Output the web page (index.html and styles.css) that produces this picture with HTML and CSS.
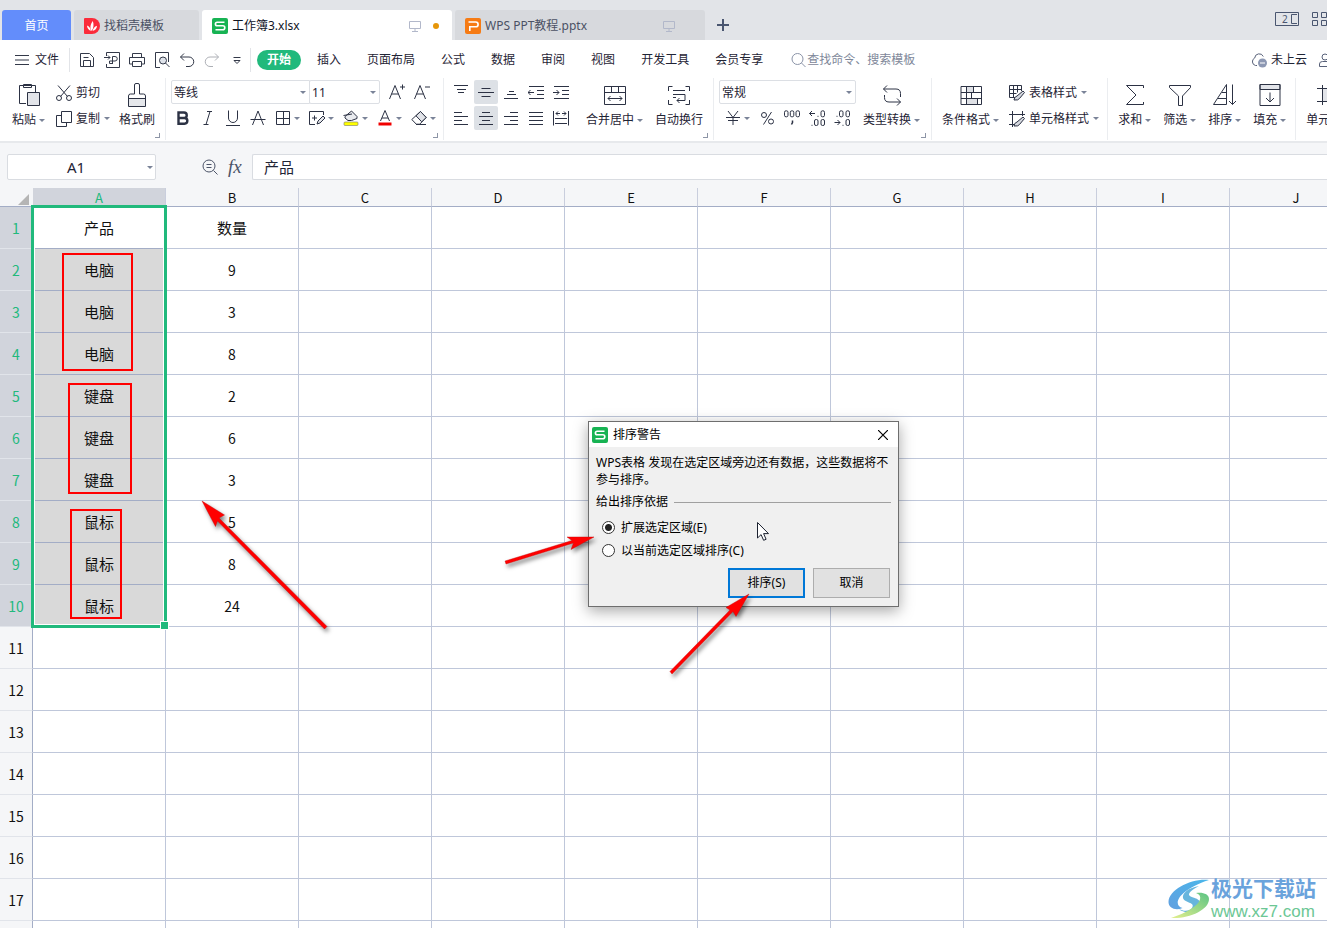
FILE: index.html
```html
<!DOCTYPE html>
<html lang="zh-CN">
<head>
<meta charset="utf-8">
<title>工作簿3.xlsx</title>
<link rel="stylesheet" href="styles.css">
</head>
<body>
<header class="titlebar">
  <button class="tab tab-home">首页</button>
  <button class="tab tab-docer">
    <svg class="i16" viewBox="0 0 16 16"><path d="M1 0h7a8 8 0 0 1 0 16H1a1 1 0 0 1-1-1V1a1 1 0 0 1 1-1z" fill="#fb2b3a"/><path d="M7.6 13C5.600 10 6.400 6 8.800 3c1.200 3.500 1 7-1.200 10zM6.800 13C4.500 12.200 3 10 3 7.600 5.200 8.400 6.600 10.400 6.800 13zM8.500 13c.6-2.800 2-4.500 4.500-5.300-.2 2.700-1.700 4.700-4.500 5.300z" fill="#fff"/></svg>
    找稻壳模板</button>
  <button class="tab tab-doc tab-active">
    <svg class="i16" viewBox="0 0 16 16"><rect width="16" height="16" rx="2" fill="#17b353"/><path d="M12.500 4.200H5.200a1.600 1.600 0 0 0 0 3.600h5.600a1.900 1.900 0 0 1 0 4H3.500" fill="none" stroke="#fff" stroke-width="1.600"/></svg>
    <span class="tab-name">工作簿3.xlsx</span>
    <svg class="screen" viewBox="0 0 12 12"><path d="M.5 1.500h11v7H.5zM6 8.500v3M3 11.500h6" fill="none" stroke="#b2b8ca"/></svg>
    <i class="dot"></i></button>
  <button class="tab tab-doc">
    <svg class="i16" viewBox="0 0 16 16"><rect width="16" height="16" rx="2" fill="#f67b14"/><path d="M3.500 4h7.200a2.200 2.200 0 0 1 0 4.800H4.800V13" fill="none" stroke="#fff" stroke-width="1.600"/></svg>
    <span class="tab-name">WPS PPT教程.pptx</span>
    <svg class="screen screen-last" viewBox="0 0 12 12"><path d="M.5 1.500h11v7H.5zM6 8.500v3M3 11.500h6" fill="none" stroke="#b2b8ca"/></svg></button>
  <button class="add" aria-label="新建"><svg viewBox="0 0 12 12"><path d="M6 0v12M0 6h12" stroke="#4a5670" stroke-width="2"/></svg></button>
  <div class="win">
    <button class="win-two" aria-label="窗口"><span>2</span><svg viewBox="0 0 24 14"><path d="M.5.5h23v13H.5zM22 2.500h-5.500v9H22M18.500 11.500h2" fill="none" stroke="#4a5670"/></svg></button>
    <button class="win-apps" aria-label="应用"><svg viewBox="0 0 15 15"><path d="M.5.5h5v5h-5zM9.500.5h5v5h-5zM.5 8.500h5v5h-5zM9.500 8.500h5v5h-5z" fill="none" stroke="#4a5670"/></svg></button>
  </div>
</header>

<nav class="menubar">
  <button class="file"><svg viewBox="0 0 14 10"><path d="M0 .5h14M0 5h14M0 9.500h14" stroke="#333949"/></svg>文件</button>
  <div class="quick">
    <button aria-label="保存"><svg class="i16" viewBox="0 0 16 16"><path d="M1.500 1.500h9l4 4v9h-13zM4.500 14V8.500h7V14M4.500 5.500h5" /></svg></button>
    <button aria-label="输出为PDF"><svg class="i16" viewBox="0 0 16 16"><path d="M2.500 4V.5h13v15h-13V12M0 5.500h6M4 3.500l2 2-2 2M8.500 12V4.500H11a2.200 2.200 0 0 1 0 4.500H5.500v2.500h3"/></svg></button>
    <button aria-label="打印"><svg class="i16" viewBox="0 0 16 16"><path d="M3.500 5V1.500h9V5M3.500 12H.5V5.500h15V12h-3M3.500 9.500h9v5h-9z"/></svg></button>
    <button aria-label="打印预览"><svg class="i16" viewBox="0 0 16 16"><path d="M14.500 10V.5h-13v15H6"/><circle cx="9" cy="8.500" r="3.500" fill="#dfe3ea"/><path d="M11.500 11l4 4"/></svg></button>
    <button aria-label="撤销"><svg class="i16" viewBox="0 0 16 16"><path d="M5 1.500L1.500 5 5 8.500M1.500 5H10a4.500 4.500 0 0 1 0 9.500H7"/></svg></button>
    <button class="faded" aria-label="恢复"><svg class="i16" viewBox="0 0 16 16"><path d="M11 1.500L14.500 5 11 8.500M14.500 5H6a4.500 4.500 0 0 0 0 9.500h3"/></svg></button>
    <button aria-label="更多"><svg class="i16" viewBox="0 0 16 16"><path d="M4.500 5.500h7M5 8.500h6L8 11.500z"/></svg></button>
  </div>
  <div class="menus">
    <button class="current">开始</button><button>插入</button><button>页面布局</button><button>公式</button><button>数据</button><button>审阅</button><button>视图</button><button>开发工具</button><button>会员专享</button>
  </div>
  <label class="search"><svg class="i16" viewBox="0 0 16 16"><circle cx="6.500" cy="7" r="5.500"/><path d="M10.500 11l4 4"/></svg><input type="text" placeholder="查找命令、搜索模板" aria-label="查找命令"></label>
  <div class="account">
    <button><svg class="i16" viewBox="0 0 16 16"><path d="M6 13.500H4.500a4 4 0 0 1-.8-7.500 4.500 4.500 0 0 1 8.600-1.500" fill="none" stroke="#586179"/><circle cx="11.500" cy="11" r="4.500" fill="#8d98b3" stroke="none"/><path d="M9 11h5" stroke="#fff"/></svg>未上云</button>
    <button aria-label="协作"><svg class="i16" viewBox="0 0 16 16"><circle cx="6" cy="5" r="3" fill="none" stroke="#586179"/><path d="M.5 14.500V12q0-2.500 3-2.500h5q3 0 3 2.500v2.500z" fill="none" stroke="#586179"/></svg></button>
  </div>
</nav>

<section class="ribbon">
  <div class="group g-clip">
    <button class="big"><svg class="i24" viewBox="0 0 24 24"><path d="M9 20.500H2.500v-18h16V9M6.500 4.500v-3h8v3z"/><path d="M10.500 9.500h12v13h-12z" fill="#e2e4e9"/></svg><span class="cap drop">粘贴</span></button>
    <div class="rows">
      <button class="small"><svg class="i16" viewBox="0 0 16 16"><path d="M2 .5l9.500 11M14 .5l-9.500 11"/><circle cx="3" cy="13" r="2.500"/><circle cx="13" cy="13" r="2.500"/></svg>剪切</button>
      <button class="small drop"><svg class="i16" viewBox="0 0 16 16"><path d="M5.500.5h10v11h-10zM5.500 4.500h-5v11h10v-4"/></svg>复制</button>
    </div>
    <button class="big"><svg class="i24" viewBox="0 0 24 24"><path d="M3.500 15h17v8h-17z" fill="#e5e7eb" stroke="none"/><path d="M9.500 11V2q0-1.500 1.500-1.500h2q1.500 0 1.500 1.500v9h4q2 0 2 2v10.500h-17V13q0-2 2-2zM3.500 15.500h17"/></svg><span class="cap">格式刷</span></button>
    <i class="corner"></i>
  </div>

  <div class="group g-font">
    <div class="rows">
      <div class="line">
        <span class="sel sel-font"><select aria-label="字体"><option>等线</option></select></span><span class="sel sel-size"><select aria-label="字号"><option>11</option></select></span>
        <button class="tool grow" aria-label="增大字号"><svg class="i16" viewBox="0 0 16 16"><path d="M.5 15L6 1.500 11.500 15M2.500 10h7M11 3h5M13.500.5v5"/></svg></button>
        <button class="tool" aria-label="减小字号"><svg class="i16" viewBox="0 0 16 16"><path d="M.5 15L6 1.500 11.500 15M2.500 10h7M11 3h5"/></svg></button>
      </div>
      <div class="line">
        <button class="tool" aria-label="加粗"><svg class="i16" viewBox="0 0 16 16"><path d="M3.500 2.500H9a2.700 2.700 0 0 1 0 5.500H3.500zM3.500 8h6a2.800 2.800 0 0 1 0 5.700h-6z" stroke-width="2.400"/></svg></button>
        <button class="tool" aria-label="倾斜"><svg class="i16" viewBox="0 0 16 16"><path d="M7 1.500h5M3.500 14.500h5M10 1.500l-4 13"/></svg></button>
        <button class="tool" aria-label="下划线"><svg class="i16" viewBox="0 0 16 16"><path d="M3.500.5V8a4.500 4.500 0 0 0 9 0V.5M1 15.500h14"/></svg></button>
        <button class="tool" aria-label="删除线"><svg class="i16" viewBox="0 0 16 16"><path d="M2.500 15L8 1l5.500 14M.5 9.500h15"/></svg></button>
        <div class="drops">
          <button class="drop" aria-label="边框"><svg class="i16" viewBox="0 0 16 16"><path d="M1.500 1.500h13v13h-13zM1.500 8.500h13M8.500 1.500v13"/></svg></button>
          <button class="drop" aria-label="绘图边框"><svg class="i16" viewBox="0 0 16 16"><path d="M6 14.500H.5v-13h14V5M3 8h5M5.500 5.500v5"/><path d="M8 14l1-3 5-5 2 2-5 5z" fill="#e2e4e9"/></svg></button>
          <button class="drop" aria-label="填充颜色"><svg class="i16" viewBox="0 0 16 16"><path d="M2 6.500l6.500-5.500L14 6.500v2L8.500 10.500 5 10.500 2 8z" fill="#e9ebef"/><path d="M.5 5.500L9 4"/><rect x="1" y="12" width="14" height="3.500" rx="1" fill="#ff0" stroke="#777" stroke-width=".6"/></svg></button>
          <button class="drop" aria-label="字体颜色"><svg class="i16" viewBox="0 0 16 16"><path d="M3.500 11L8 .5 12.500 11M5 8h6"/><path d="M1.500 14h13" stroke="#f00000" stroke-width="3"/></svg></button>
          <button class="drop" aria-label="清除"><svg class="i16" viewBox="0 0 16 16"><path d="M.8 9.500l4.500 4.700h3.400l6.500-6.700L9.500 1.500z"/><path d="M5 5.800l4.500-4.300 5.700 6-4.500 4.300z" fill="#e2e4e9"/><path d="M5 14.500h10"/></svg></button>
        </div>
      </div>
    </div>
    <i class="corner"></i>
  </div>

  <div class="group g-align">
    <div class="rows">
      <div class="line">
        <button class="tool" aria-label="顶端对齐"><svg class="i16" viewBox="0 0 16 16"><path d="M1 1.500h14M4 5.500h9M5 8.500h6"/></svg></button>
        <button class="tool on" aria-label="垂直居中"><svg class="i16" viewBox="0 0 16 16"><path d="M3.500 4.500h9M0 8.500h16M3.500 12.500h9"/></svg></button>
        <button class="tool" aria-label="底端对齐"><svg class="i16" viewBox="0 0 16 16"><path d="M6 7.500h5M4 10.500h9M1 14.500h14"/></svg></button>
        <button class="tool" aria-label="减少缩进"><svg class="i16" viewBox="0 0 16 16"><path d="M1 2.500h15M9 6.500h7M9 10.500h7M1 14.500h15M0 8.500h6M2.500 6L0 8.500 2.500 11"/></svg></button>
        <button class="tool" aria-label="增加缩进"><svg class="i16" viewBox="0 0 16 16"><path d="M1 2.500h15M9 6.500h7M9 10.500h7M1 14.500h15M0 8.500h6M3.500 6L6 8.500 3.500 11"/></svg></button>
      </div>
      <div class="line">
        <button class="tool" aria-label="左对齐"><svg class="i16" viewBox="0 0 16 16"><path d="M1 2.500h8M1 6.500h14M1 10.500h8M1 14.500h14"/></svg></button>
        <button class="tool on" aria-label="水平居中"><svg class="i16" viewBox="0 0 16 16"><path d="M4 2.500h8M1 6.500h14M4 10.500h8M1 14.500h14"/></svg></button>
        <button class="tool" aria-label="右对齐"><svg class="i16" viewBox="0 0 16 16"><path d="M7 2.500h8M1 6.500h14M7 10.500h8M1 14.500h14"/></svg></button>
        <button class="tool" aria-label="两端对齐"><svg class="i16" viewBox="0 0 16 16"><path d="M1 2.500h14M1 6.500h14M1 10.500h14M1 14.500h14"/></svg></button>
        <button class="tool" aria-label="分散对齐"><svg class="i16" viewBox="0 0 16 16"><path d="M.5 1v14.500M15.500 1v14.500M3 3.500h4M9 3.500h4M5 1.500l-2 2 2 2M11 1.500l2 2-2 2M2 8.500h12M2 13.500h12"/></svg></button>
      </div>
    </div>
    <button class="big"><svg class="i24" viewBox="0 0 24 24"><path d="M1.500 3.500h21v18h-21zM1.500 9.500h21M8.500 3.500v6M15.500 3.500v6M5 15.500h14M7.500 13L5 15.500 7.500 18M16.500 13l2.500 2.500-2.500 2.500"/></svg><span class="cap drop">合并居中</span></button>
    <button class="big"><svg class="i24" viewBox="0 0 24 24"><path d="M5.500 3.500h-4V8M18.500 3.500h4V8M5.500 21.500h-4V17M18.500 21.500h4V17M6 7.500h12M6 11.500h12M6 14.500h3M18 11.500v6h-8M12.500 15L10 17.500l2.500 2.500"/></svg><span class="cap">自动换行</span></button>
    <i class="corner"></i>
  </div>

  <div class="group g-num">
    <div class="rows">
      <div class="line"><span class="sel sel-num"><select aria-label="数字格式"><option>常规</option></select></span></div>
      <div class="line nums">
        <button class="drop" aria-label="货币"><svg class="i16" viewBox="0 0 16 16"><path d="M3 1l5 6.500L13 1M1 7.500h14M3 10.500h10M8 7.500v7.500"/></svg></button>
        <button aria-label="百分比"><svg class="i16" viewBox="0 0 16 16"><circle cx="5" cy="5" r="2.500"/><circle cx="12" cy="11.500" r="2.500"/><path d="M12.500 2l-8 12.500"/></svg></button>
        <button aria-label="千位分隔"><svg class="i16" viewBox="0 0 16 16"><rect x=".5" y=".8" width="3.500" height="6" rx="1.500"/><rect x="6.300" y=".8" width="3.500" height="6" rx="1.500"/><rect x="12" y=".8" width="3.500" height="6" rx="1.500"/><path d="M8.500 10.500v2l-1 2" stroke-width="1.500"/></svg></button>
        <button aria-label="增加小数位"><svg class="i16" viewBox="0 0 16 16"><path d="M.5 3.500H6M3 1L.5 3.500 3 6M8.500 6.300h1M2.500 15.300h1"/><rect x="12" y=".8" width="3.500" height="6" rx="1.500"/><rect x="5.500" y="9.500" width="3.500" height="6" rx="1.500"/><rect x="12" y="9.500" width="3.500" height="6" rx="1.500"/></svg></button>
        <button aria-label="减少小数位"><svg class="i16" viewBox="0 0 16 16"><path d="M.5 12.500H6M3.500 10L6 12.500 3.500 15M2.500 6.300h1M8.500 15.300h1"/><rect x="5.500" y=".8" width="3.500" height="6" rx="1.500"/><rect x="12" y=".8" width="3.500" height="6" rx="1.500"/><rect x="12" y="9.500" width="3.500" height="6" rx="1.500"/></svg></button>
      </div>
    </div>
    <button class="big"><svg class="i24" viewBox="0 0 24 24"><path d="M7 2.500l-3.500 3.500L7 9.500M3.500 6H16q4.500 0 4.500 4.500V14M17 15.500l3.500 3.500-3.500 3.500M20.500 19H9q-4.500 0-4.500-4.500V12"/></svg><span class="cap drop">类型转换</span></button>
    <i class="corner"></i>
  </div>

  <div class="group g-style">
    <button class="big"><svg class="i24" viewBox="0 0 24 24"><path d="M7.500 3.500h7v6h-7zM7.500 15.500h11v6h-11z" fill="#dfe1e6"/><path d="M2 3.500h20.500v18H2zM2 9.500h20.500M2 15.500h20.500M7.500 3.500v18M14.500 3.500v6M12.500 9.500v6M18.500 15.500v6"/></svg><span class="cap drop">条件格式</span></button>
    <div class="rows">
      <button class="small drop"><svg class="i16" viewBox="0 0 16 16"><path d="M6 12.500H.5V.5h12V6M.5 4.500h12M.5 8.500h7M4.500.5v12M8.500.5v7"/><path d="M5 15q0-3 3-4l6-5 1.500 1.500-5 6q-1 2-5.500 1.500z" fill="#d5d8df"/></svg>表格样式</button>
      <button class="small drop"><svg class="i16" viewBox="0 0 16 16"><path d="M0 3.500h16M3.500 0v16M0 13.500h5M13.500 0v5"/><path d="M5 15q0-3 3-4l6-5 1.500 1.500-5 6q-1 2-5.500 1.500z" fill="#d5d8df"/></svg>单元格样式</button>
    </div>
  </div>

  <div class="group g-edit">
    <button class="big"><svg class="i24" viewBox="0 0 24 24"><path d="M20.500 5V2.500h-17L13 12l-9.500 9.500h17V19"/></svg><span class="cap drop">求和</span></button>
    <button class="big"><svg class="i24" viewBox="0 0 24 24"><path d="M1.500 2.500h21v2L14.500 13v9.500h-4V13L1.500 4.500z"/></svg><span class="cap drop">筛选</span></button>
    <button class="big"><svg class="i24" viewBox="0 0 24 24"><path d="M.5 21.500h13v-20zM5 15.500h8.500M9 9.500h4.500M19.500 1.500v20M16 18l3.500 3.500L23 18"/></svg><span class="cap drop">排序</span></button>
    <button class="big"><svg class="i24" viewBox="0 0 24 24"><path d="M2 1.500h20v5H2z" fill="#e2e4e9"/><path d="M2 1.500h20v21H2zM12 9.500v9M8 15l4 4 4-4"/></svg><span class="cap drop">填充</span></button>
  </div>

  <div class="group g-cell">
    <button class="big"><svg class="i24" viewBox="0 0 24 24"><path d="M5 6h14v12H5z" fill="#e2e4e9" stroke="none"/><path d="M0 5.500h24M0 18.500h24M5.500 2v20M18.500 2v20"/></svg><span class="cap drop">单元格</span></button>
  </div>
</section>

<section class="formula">
  <label class="namebox drop"><input type="text" value="A1" aria-label="名称框"></label>
  <button class="look" aria-label="浏览公式"><svg viewBox="0 0 16 16"><circle cx="7" cy="7" r="6"/><path d="M11.500 11.500l4 4M4.500 5.500h5M4.500 8.500h5"/></svg></button>
  <button class="fx">fx</button>
  <input class="content" type="text" value="产品" aria-label="编辑栏">
</section>

<main class="sheet">
  <table>
    <thead><tr><th class="rowcol"><i class="all"></i></th><th class="sel-head">A</th><th>B</th><th>C</th><th>D</th><th>E</th><th>F</th><th>G</th><th>H</th><th>I</th><th>J</th></tr></thead>
    <tbody class="picked">
      <tr><th>1</th><td>产品</td><td>数量</td><td></td><td></td><td></td><td></td><td></td><td></td><td></td><td></td></tr>
      <tr><th>2</th><td>电脑</td><td>9</td><td></td><td></td><td></td><td></td><td></td><td></td><td></td><td></td></tr>
      <tr><th>3</th><td>电脑</td><td>3</td><td></td><td></td><td></td><td></td><td></td><td></td><td></td><td></td></tr>
      <tr><th>4</th><td>电脑</td><td>8</td><td></td><td></td><td></td><td></td><td></td><td></td><td></td><td></td></tr>
      <tr><th>5</th><td>键盘</td><td>2</td><td></td><td></td><td></td><td></td><td></td><td></td><td></td><td></td></tr>
      <tr><th>6</th><td>键盘</td><td>6</td><td></td><td></td><td></td><td></td><td></td><td></td><td></td><td></td></tr>
      <tr><th>7</th><td>键盘</td><td>3</td><td></td><td></td><td></td><td></td><td></td><td></td><td></td><td></td></tr>
      <tr><th>8</th><td>鼠标</td><td>5</td><td></td><td></td><td></td><td></td><td></td><td></td><td></td><td></td></tr>
      <tr><th>9</th><td>鼠标</td><td>8</td><td></td><td></td><td></td><td></td><td></td><td></td><td></td><td></td></tr>
      <tr><th>10</th><td>鼠标</td><td>24</td><td></td><td></td><td></td><td></td><td></td><td></td><td></td><td></td></tr>
    </tbody>
    <tbody>
      <tr><th>11</th><td></td><td></td><td></td><td></td><td></td><td></td><td></td><td></td><td></td><td></td></tr>
      <tr><th>12</th><td></td><td></td><td></td><td></td><td></td><td></td><td></td><td></td><td></td><td></td></tr>
      <tr><th>13</th><td></td><td></td><td></td><td></td><td></td><td></td><td></td><td></td><td></td><td></td></tr>
      <tr><th>14</th><td></td><td></td><td></td><td></td><td></td><td></td><td></td><td></td><td></td><td></td></tr>
      <tr><th>15</th><td></td><td></td><td></td><td></td><td></td><td></td><td></td><td></td><td></td><td></td></tr>
      <tr><th>16</th><td></td><td></td><td></td><td></td><td></td><td></td><td></td><td></td><td></td><td></td></tr>
      <tr><th>17</th><td></td><td></td><td></td><td></td><td></td><td></td><td></td><td></td><td></td><td></td></tr>
      <tr><th></th><td></td><td></td><td></td><td></td><td></td><td></td><td></td><td></td><td></td><td></td></tr>
    </tbody>
  </table>
  <div class="selection"></div>
  <div class="mark mark-pc"></div>
  <div class="mark mark-key"></div>
  <div class="mark mark-mouse"></div>

  <form class="dialog" role="dialog" aria-labelledby="dlg-title">
    <div class="dlg-bar">
      <svg class="i16" viewBox="0 0 16 16"><rect width="16" height="16" rx="2" fill="#17b353"/><path d="M12.500 4.200H5.200a1.600 1.600 0 0 0 0 3.600h5.600a1.900 1.900 0 0 1 0 4H3.500" fill="none" stroke="#fff" stroke-width="1.600"/></svg>
      <span id="dlg-title">排序警告</span>
      <button type="button" class="close" aria-label="关闭"><svg viewBox="0 0 10 10"><path d="M0 0l10 10M10 0L0 10" stroke="#000" stroke-width="1.200"/></svg></button>
    </div>
    <div class="dlg-body">
      <p>WPS表格 发现在选定区域旁边还有数据，这些数据将不参与排序。</p>
      <div class="legend">给出排序依据</div>
      <label class="radio"><input type="radio" name="range" checked>扩展选定区域(E)</label>
      <label class="radio"><input type="radio" name="range">以当前选定区域排序(C)</label>
      <div class="actions"><button type="button" class="ok">排序(S)</button><button type="button">取消</button></div>
    </div>
  </form>

  <svg class="arrows" width="800" height="700" viewBox="0 188 800 700">
    <g fill="#f00" stroke="#c40808" stroke-width=".4">
      <path d="M202 501l22.500 14-5.500 3 108 108.500-2.500 2.500-107-108-2 5.500z"/>
      <path d="M594 537l-23 12.500 2.500-6.500L506 564l-1-3 67-20.500-5-3.500z"/>
      <path d="M749 594l-13 22.500-3-5L672 674l-2-2.500 60-61.500-4-2.500z"/>
    </g>
  </svg>
  <svg class="pointer" viewBox="0 0 12 19"><path d="M.5.5v15.500l3.600-3.400 2.500 5.700 2.500-1-2.500-5.700h4.900z" fill="#fff" stroke="#1c2230"/></svg>

  <div class="brand">
    <svg viewBox="0 0 42 40">
      <defs><linearGradient id="sea" x1="0" x2="1" y1="1" y2="0"><stop offset="0" stop-color="#62a0e0"/><stop offset="1" stop-color="#49b6ea"/></linearGradient><linearGradient id="leaf" x1="0" x2="1" y1="1" y2="0"><stop offset="0" stop-color="#e4ef8c"/><stop offset="1" stop-color="#5cc484"/></linearGradient></defs>
      <path d="M41 1C24-1 1 10 .5 23c0 6 7 9 14 6C4 26 10 11 41 1z" fill="url(#sea)"/>
      <path d="M31 7c-12 2-17 8-16 12 1 5 13 4 9 10-2 3-8 4-13 1 6 6 21 3 21-6 0-6-12-5-11-9 1-3 5-5 10-8z" fill="#67b5dd"/>
      <path d="M3 39c18 1 38-8 38-19 0-5-6-7-13-6 9 3 5 15-25 25z" fill="url(#leaf)"/>
    </svg>
    <div class="brand-text"><strong>极光下载站</strong><span>www.xz7.com</span></div>
  </div>
</main>
</body>
</html>
```

FILE: styles.css
```css
* { box-sizing: border-box; }
body {
  margin: 0;
  height: 100vh;
  display: flex;
  flex-direction: column;
  overflow: hidden;
  background: #fff;
  color: #1f2435;
  font: 12px/16px "Noto Sans", "Noto Sans CJK SC", sans-serif;
}
button, input, select { font: inherit; color: inherit; }
button { border: 0; padding: 0; margin: 0; background: none; display: flex; align-items: center; white-space: nowrap; flex: none; }
svg { display: block; flex: none; }
.i16 { width: 16px; height: 16px; }
.i24 { width: 24px; height: 24px; }

/* window tabs */
.titlebar { display: flex; align-items: flex-end; gap: 3px; height: 40px; padding-left: 2px; background: #e2e4e8; flex: none; }
.tab { height: 30px; background: #d7d9dd; border-radius: 3px 3px 0 0; color: #4b5164; padding: 2px 10px 0; gap: 4px; }
.tab-home { width: 69px; background: #638dfb; color: #fff; justify-content: center; }
.tab-docer { width: 125px; }
.tab-doc { width: 250px; }
.tab-active { background: #fff; color: #10141f; }
.tab-name { flex: 1; text-align: left; }
.screen { width: 12px; height: 12px; }
.screen-last { margin-right: 20px; }
.dot { width: 6px; height: 6px; border-radius: 50%; background: #e6960a; margin: 0 3px 0 8px; }
.add { height: 30px; padding: 0 9px; }
.add svg { width: 12px; height: 12px; }
.win { margin-left: auto; display: flex; gap: 13px; height: 40px; align-items: flex-start; padding-top: 12px; overflow: hidden; }
.win-two { position: relative; }
.win-two svg { width: 24px; height: 14px; }
.win-two span { position: absolute; left: 7px; top: 0; line-height: 14px; font-size: 10px; color: #4a5670; }
.win-apps { width: 15px; }
.win-apps svg { width: 15px; height: 15px; }

/* menu row */
.menubar { display: flex; align-items: center; height: 38px; padding: 1px 0 0 15px; flex: none; }
.menubar svg { fill: none; stroke: #333949; }
.file { gap: 6px; }
.file svg { width: 14px; height: 10px; }
.quick { display: flex; gap: 9px; margin-left: 10px; padding: 0 5px 0 9px; border-left: 1px solid #e2e4e8; border-right: 1px solid #e2e4e8; height: 24px; align-items: center; }
.faded { opacity: .4; }
.menus { display: flex; margin-left: 3px; }
.menus button { height: 20px; padding: 0 13px; }
.menus .current { margin: 0 3px; padding: 0 10px; border-radius: 10px; background: #21b97c; color: #fff; font-weight: bold; }
.search { display: flex; align-items: center; margin-left: 15px; }
.menubar .search svg { stroke: #8b94a8; }
.search input { width: 120px; border: 0; padding: 0; background: none; outline: 0; }
.search input::placeholder { color: #7e8799; opacity: 1; }
.account { margin-left: auto; display: flex; gap: 12px; }
.account button { gap: 4px; }
.account button:last-child { width: 8px; overflow: hidden; }

/* ribbon */
.ribbon { display: flex; height: 65px; overflow: hidden; border-bottom: 2px solid #e7e9ec; flex: none; }
.ribbon svg { fill: none; stroke: #2c3244; }
.group { position: relative; display: flex; align-items: flex-start; height: 62px; padding-top: 2px; border-right: 1px solid #ebedf0; flex: none; }
.big { flex-direction: column; gap: 5px; padding-top: 3px; }
.rows { display: flex; flex-direction: column; gap: 2px; }
.line { display: flex; align-items: center; height: 24px; gap: 1px; }
.small { height: 24px; gap: 4px; padding-top: 1px; }
.cap { display: flex; align-items: center; }
.drop::after { content: ""; border: 3px solid transparent; border-top-color: #7a8398; border-bottom: 0; width: 0; margin-left: 3px; flex: none; }
.small.drop::after { margin-left: 0; }
.tool { width: 24px; height: 24px; justify-content: center; }
.on { background: #dde1e6; border-radius: 2px; }
.corner { position: absolute; right: 5px; bottom: 2px; width: 5px; height: 5px; border-right: 1px solid #8d95a6; border-bottom: 1px solid #8d95a6; }
.g-clip { padding-left: 12px; padding-right: 10px; }
.g-clip .rows { margin: 0 9px 0 11px; }
.g-font { padding-left: 5px; padding-right: 7px; }
.g-align { padding-left: 5px; padding-right: 10px; }
.g-align .big { margin-left: 12px; }
.g-align .rows { margin-right: 1px; }
.g-num { padding-left: 5px; padding-right: 11px; gap: 7px; }
.g-style { padding-left: 10px; padding-right: 8px; gap: 10px; }
.g-edit { padding-left: 10px; padding-right: 9px; gap: 12px; }
.g-cell { padding-left: 10px; }
.sel { position: relative; display: flex; height: 24px; border: 1px solid #dcdfe4; border-radius: 2px; }
.sel::after { content: ""; position: absolute; right: 3px; top: 10px; border: 3px solid transparent; border-top-color: #7a8398; border-bottom: 0; }
.sel select { appearance: none; width: 100%; border: 0; padding: 1px 2px 0; background: none; }
.sel-font { width: 139px; border-radius: 2px 0 0 2px; }
.sel-size { width: 71px; margin-left: -2px; }
.sel-num { width: 137px; }
.grow { margin-left: 4px; }
.drops { display: flex; gap: 9px; margin-left: 4px; }
.nums { gap: 9px; padding-left: 6px; }

/* formula bar */
.formula { display: flex; align-items: center; height: 45px; padding: 3px 0 0 7px; background: #f5f6f8; flex: none; }
.namebox { display: flex; align-items: center; width: 149px; height: 26px; background: #fff; border: 1px solid #d9dce1; border-radius: 2px; padding-right: 2px; }
.namebox input { flex: 1; min-width: 0; border: 0; background: none; text-align: center; font-size: 15px; outline: 0; padding: 0; }
.look { margin-left: 46px; }
.look svg { width: 16px; height: 16px; fill: none; stroke: #4c5468; }
.fx { margin-left: 10px; width: 24px; font: italic 19px/20px "Liberation Serif", serif; color: #4c5468; }
.content { flex: 1; min-width: 0; height: 26px; border: 1px solid #d9dce1; border-right: 0; border-radius: 2px 0 0 2px; padding: 0 11px 2px; font-size: 15px; background: #fff; outline: 0; }

/* grid */
.sheet { position: relative; flex: 1; min-height: 0; overflow: hidden; }
table { table-layout: fixed; width: 1363px; border-collapse: separate; border-spacing: 0; font: 14px/20px "Noto Sans CJK SC", sans-serif; color: #111; }
th { font-weight: normal; padding: 0; background: #f5f6f8; border-right: 1px solid #c9cedd; border-bottom: 1px solid #a3adc6; }
thead th { height: 19px; line-height: 16px; padding-top: 2px; font-size: 13px; width: 133px; }
thead .rowcol { width: 33px; border-right-color: #f5f6f8; }
thead .sel-head { background: #d1d4dc; color: #21b97c; }
.all { display: block; margin: 3px 3px 0 auto; width: 0; border-left: 11px solid transparent; border-bottom: 11px solid #b5b5b5; }
tbody th { border-right-color: #a3adc6; border-bottom-color: #e1e4ea; }
.picked th { background: #d1d4dc; color: #21b97c; }
td { height: 42px; padding: 0; text-align: center; border-right: 1px solid #bfc7da; border-bottom: 1px solid #bfc7da; }
.picked td:nth-child(2) { font-size: 15px; background: #d9d9d9; border-bottom-color: #a3adc6; }
.picked tr:first-child td { font-size: 15px; }
.picked tr:first-child td:nth-child(2) { background: #fff; }

/* overlays on the grid */
.selection { position: absolute; left: 31px; top: 17px; width: 136px; height: 423px; border: 3px solid #21b97c; box-shadow: inset 0 0 0 1px #fff; }
.selection::after { content: ""; position: absolute; right: -5px; bottom: -5px; width: 7px; height: 7px; background: #21b97c; border: 1px solid #fff; }
.mark { position: absolute; border: 2px solid #f00; }
.mark-pc { left: 62px; top: 65px; width: 71px; height: 118px; }
.mark-key { left: 68px; top: 195px; width: 64px; height: 111px; }
.mark-mouse { left: 70px; top: 321px; width: 52px; height: 110px; }
.arrows { position: absolute; left: 0; top: 0; filter: drop-shadow(2px 3px 2px rgba(0, 0, 0, .5)); pointer-events: none; }
.pointer { position: absolute; left: 757px; top: 334px; width: 12px; height: 19px; }

.dialog { position: absolute; left: 588px; top: 233px; width: 311px; background: #f0f0f0; border: 1px solid #6e6e6e; box-shadow: 0 4px 14px rgba(0, 0, 0, .35); color: #000; }
.dlg-bar { display: flex; align-items: center; gap: 5px; height: 25px; padding: 0 10px 0 3px; background: #fff; }
.close { margin-left: auto; }
.close svg { width: 10px; height: 10px; }
.dlg-body { padding: 7px 7px 8px; }
.dlg-body p { margin: 0; line-height: 17px; width: 296px; }
.legend { display: flex; align-items: center; gap: 6px; margin-top: 6px; }
.legend::after { content: ""; flex: 1; height: 1px; background: #a0a0a0; }
.radio { display: flex; align-items: center; height: 23px; gap: 6px; padding-left: 6px; }
.legend + .radio { margin-top: 6px; }
.radio input { appearance: none; width: 13px; height: 13px; margin: 0; border: 1px solid #333; border-radius: 50%; background: #fff; }
.radio input:checked { background: radial-gradient(circle, #222 3px, #fff 4px); }
.actions { display: flex; justify-content: flex-end; gap: 8px; margin: 6px 1px 0 0; }
.actions button { width: 77px; height: 30px; justify-content: center; background: #e1e1e1; border: 1px solid #adadad; }
.actions .ok { border: 2px solid #0078d7; }

.brand { position: absolute; right: 11px; bottom: 7px; display: flex; align-items: center; gap: 1px; }
.brand svg { width: 42px; height: 40px; }
.brand-text { display: flex; flex-direction: column; gap: 3px; }
.brand-text strong { font-size: 21px; line-height: 24px; color: #6aa3dc; }
.brand-text span { font: 17px/18px "Liberation Sans", sans-serif; color: #6cc795; }
```
